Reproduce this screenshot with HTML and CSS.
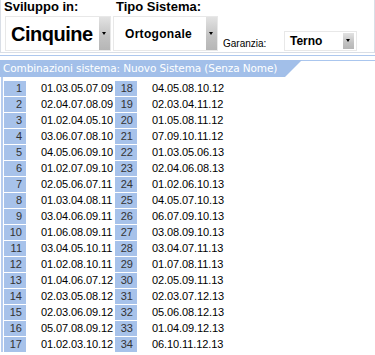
FILE: index.html
```html
<!DOCTYPE html>
<html lang="it">
<head>
  <meta charset="UTF-8">
  <title>Sistema</title>
  <link rel="stylesheet" href="styles.css">
</head>
<body>

  <!-- Toolbar -->
  <div class="toolbar">
    <div class="field field-first">
      <div class="label">Sviluppo in:</div>
      <div class="select select-big">
        <span class="value">Cinquine</span>
        <span class="btn"></span>
      </div>
    </div>
    <div class="field field-second">
      <div class="label">Tipo Sistema:</div>
      <div class="select select-mid">
        <span class="value">Ortogonale</span>
        <span class="btn"></span>
      </div>
    </div>
    <div class="field-inline">
      <span class="small-label">Garanzia:</span>
      <div class="select select-small">
        <span class="value">Terno</span>
        <span class="btn"></span>
      </div>
    </div>
  </div>

  <div class="rule"></div>

  <div class="caption">
    <span class="caption-text">Combinazioni sistema: Nuovo Sistema (Senza Nome)</span>
  </div>

  <div class="list" id="list"></div>

  <script>
    const combos = [
      "01.03.05.07.09", "02.04.07.08.09", "01.02.04.05.10", "03.06.07.08.10",
      "04.05.06.09.10", "01.02.07.09.10", "02.05.06.07.11", "01.03.04.08.11",
      "03.04.06.09.11", "01.06.08.09.11", "03.04.05.10.11", "01.02.08.10.11",
      "01.04.06.07.12", "02.03.05.08.12", "02.03.06.09.12", "05.07.08.09.12",
      "01.02.03.10.12", "04.05.08.10.12", "02.03.04.11.12", "01.05.08.11.12",
      "07.09.10.11.12", "01.03.05.06.13", "02.04.06.08.13", "01.02.06.10.13",
      "04.05.07.10.13", "06.07.09.10.13", "03.08.09.10.13", "03.04.07.11.13",
      "01.07.08.11.13", "02.05.09.11.13", "02.03.07.12.13", "05.06.08.12.13",
      "01.04.09.12.13", "06.10.11.12.13"
    ];

    const list = document.getElementById("list");
    const half = combos.length / 2;

    for (let i = 0; i < half; i++) {
      const row = document.createElement("div");
      row.className = "row";
      [i, i + half].forEach(idx => {
        const num = document.createElement("span");
        num.className = "num";
        num.textContent = idx + 1;
        const val = document.createElement("span");
        val.className = "val";
        val.textContent = combos[idx];
        row.appendChild(num);
        row.appendChild(val);
      });
      list.appendChild(row);
    }
  </script>

</body>
</html>
```

FILE: styles.css
```css
body {
  margin: 0;
  font-family: 'Liberation Sans', Arial, sans-serif;
  background-color: #ffffff;
  color: #000;
}

/* toolbar */
.toolbar {
  display: flex;
  align-items: flex-end;
  height: 53px;
  box-sizing: border-box;
  padding-left: 4px;
  border: 1px solid #d9dee6;
  border-top: none;
}

.field {
  display: flex;
  flex-direction: column;
}

.field-second {
  margin-left: 2px;
}

.label {
  font-size: 13px;
  font-weight: bold;
  line-height: 16px;
  height: 17px;
  margin-left: -1px;
}

.field-second .label {
  margin-left: 3px;
}

.select {
  display: flex;
  box-sizing: border-box;
  border: 1px solid #e8e8e8;
  background-color: #fff;
}

.select .value {
  flex: 1;
  display: flex;
  align-items: center;
  font-weight: bold;
}

.btn {
  width: 11px;
  position: relative;
  background: linear-gradient(to bottom, #e2e2e2, #c2c2c2 60%, #b6b6b6);
}

.btn:after {
  content: "";
  position: absolute;
  left: 3px;
  top: 50%;
  margin-top: -2px;
  border-left: 2.5px solid transparent;
  border-right: 2.5px solid transparent;
  border-top: 3px solid #000;
}

.select-big {
  width: 106px;
  height: 35px;
  margin-bottom: 1px;
}

.select-big .value {
  font-size: 20px;
  letter-spacing: -0.5px;
  padding-left: 5px;
  padding-top: 1px;
}

.select-mid {
  width: 105px;
  height: 35px;
  margin-bottom: 1px;
}

.select-mid .value {
  font-size: 12px;
  letter-spacing: 0.3px;
  padding-left: 11px;
}

.field-inline {
  display: flex;
  align-items: center;
  margin-left: 5px;
  margin-bottom: 1px;
}

.small-label {
  font-size: 10px;
  width: 61px;
  padding-top: 4px;
}

.select-small {
  width: 73px;
  height: 20px;
}

.select-small .value {
  font-size: 12px;
  padding-left: 5px;
}

.select-small .btn {
  margin: 1px 2px 1px 0;
}

/* separator + caption */
.rule {
  margin-top: 2px;
  height: 1px;
  background-color: #aec8ee;
  margin-bottom: 4px;
}

.caption {
  border-top: 1px solid #aac6ee;
  height: 16px;
}

.caption-text {
  display: block;
  width: 302px;
  height: 17px;
  margin-top: -1px;
  box-sizing: border-box;
  padding-left: 3px;
  background-color: #a2bfe9;
  color: #ffffff;
  font-family: 'DejaVu Sans', Verdana, sans-serif;
  font-size: 10.5px;
  letter-spacing: -0.1px;
  line-height: 17px;
  white-space: nowrap;
  clip-path: polygon(0 0, 100% 0, calc(100% - 17px) 100%, 0 100%);
}

/* combinations list */
.list {
  margin-left: 1px;
  border-left: 2px solid #b6ccee;
  padding-top: 4px;
  padding-left: 1px;
}

.row {
  display: grid;
  grid-template-columns: 22px 89px 22px 1fr;
  height: 15px;
  margin-bottom: 1px;
  font-size: 11px;
  line-height: 15px;
}

.num {
  background-color: #a7c2ea;
  color: #333;
  text-align: right;
  padding-right: 4px;
}

.val {
  padding-left: 15px;
  letter-spacing: -0.1px;
}
```
